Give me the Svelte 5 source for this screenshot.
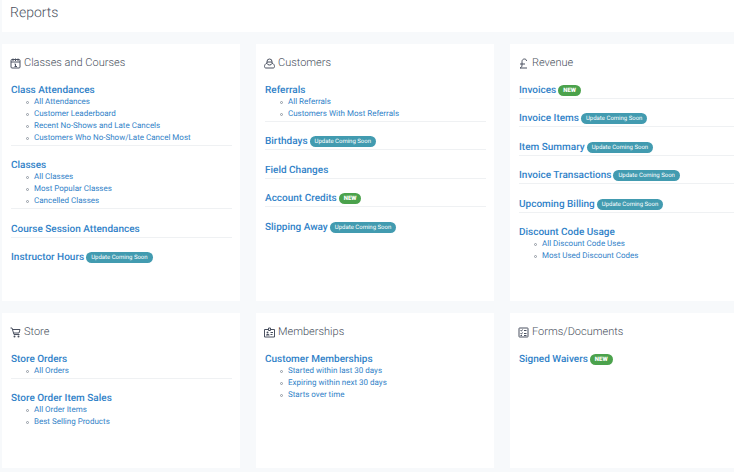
<script>
  const groups = [
    {
      name: 'Classes and Courses',
      icon: 'calendar',
      reports: [
        {
          name: 'Class Attendances',
          links: [
            'All Attendances',
            'Customer Leaderboard',
            'Recent No-Shows and Late Cancels',
            'Customers Who No-Show/Late Cancel Most',
          ],
        },
        {
          name: 'Classes',
          links: ['All Classes', 'Most Popular Classes', 'Cancelled Classes'],
        },
        { name: 'Course Session Attendances' },
        { name: 'Instructor Hours', badge: 'soon' },
      ],
    },
    {
      name: 'Customers',
      icon: 'customer',
      reports: [
        {
          name: 'Referrals',
          links: ['All Referrals', 'Customers With Most Referrals'],
        },
        { name: 'Birthdays', badge: 'soon' },
        { name: 'Field Changes' },
        { name: 'Account Credits', badge: 'new' },
        { name: 'Slipping Away', badge: 'soon' },
      ],
    },
    {
      name: 'Revenue',
      icon: 'pound',
      reports: [
        { name: 'Invoices', badge: 'new' },
        { name: 'Invoice Items', badge: 'soon' },
        { name: 'Item Summary', badge: 'soon' },
        { name: 'Invoice Transactions', badge: 'soon' },
        { name: 'Upcoming Billing', badge: 'soon' },
        {
          name: 'Discount Code Usage',
          links: ['All Discount Code Uses', 'Most Used Discount Codes'],
        },
      ],
    },
    {
      name: 'Store',
      icon: 'cart',
      reports: [
        { name: 'Store Orders', links: ['All Orders'] },
        {
          name: 'Store Order Item Sales',
          links: ['All Order Items', 'Best Selling Products'],
        },
      ],
    },
    {
      name: 'Memberships',
      icon: 'card',
      reports: [
        {
          name: 'Customer Memberships',
          links: [
            'Started within last 30 days',
            'Expiring within next 30 days',
            'Starts over time',
          ],
        },
      ],
    },
    {
      name: 'Forms/Documents',
      icon: 'form',
      reports: [{ name: 'Signed Waivers', badge: 'new' }],
    },
  ]

  const badges = { new: 'NEW', soon: 'Update Coming Soon' }
</script>

<header>
  <h1>Reports</h1>
</header>

<main>
  {#each groups as group}
    <section class="card">
      <h2>
        <svg viewBox="0 0 22 22" aria-hidden="true">
          {#if group.icon === 'calendar'}
            <rect x="2" y="3" width="18" height="17" rx="2" />
            <path d="M2 8h18" />
            <path d="M6 1v5M11 1v5M16 1v5" />
            <path d="M9 12h2v5M9 17h5" />
          {:else if group.icon === 'customer'}
            <path d="M6 11V7a5 5 0 0 1 10 0v4M6 8h10" />
            <path
              d="M6 10c-3 1-5 4-5 7 0 2 1 3 3 3h14c2 0 3-1 3-3 0-3-2-6-5-7"
            />
            <path d="M6 11c1 4 9 4 10 0" />
          {:else if group.icon === 'pound'}
            <path
              d="M17 6c0-3-2-4-4-4-3 0-5 2-5 5v7c0 3-1 5-4 6h14M4 12h10"
            />
          {:else if group.icon === 'cart'}
            <path d="M1 2h3l4 13h11M5 5h15l-2 7H7" />
            <circle class="solid" cx="9" cy="19" r="2" />
            <circle class="solid" cx="17" cy="19" r="2" />
          {:else if group.icon === 'card'}
            <path d="M8 5H1v15h20V5h-7" />
            <path d="M9 2h4v5H9z" />
            <path d="M13 11h5M13 15h4" />
            <circle class="solid" cx="7" cy="11" r="2" />
            <path class="solid" d="M4 17v-1c0-3 7-3 7 0v1z" />
          {:else}
            <rect x="2" y="2" width="18" height="18" rx="1" />
            <path d="M5 7l2 1 2-3M5 13l2 1 2-3" />
            <path d="M12 7h5M12 13h5M5 17h3M12 17h5" />
          {/if}
        </svg>
        {group.name}
      </h2>

      {#each group.reports as report}
        <div class="report">
          <h3>
            <a href="#report">{report.name}</a>
            {#if report.badge}
              <span class="badge {report.badge}">{badges[report.badge]}</span>
            {/if}
          </h3>
          {#if report.links}
            <ul>
              {#each report.links as link}
                <li><a href="#report">{link}</a></li>
              {/each}
            </ul>
          {/if}
        </div>
      {/each}
    </section>
  {/each}
</main>

<style>
  :global(body) {
    background: #f7f9fb;
    color: #4a5160;
    font-family: Roboto, 'Liberation Sans', sans-serif;
    text-rendering: geometricPrecision;
    overflow-x: hidden;
  }

  header {
    margin-left: 2px;
    padding: 5px 8px 11px;
    background: #fff;
  }

  h1 {
    margin: 0;
    font-size: 14px;
    font-weight: 300;
    line-height: 16px;
  }

  main {
    display: grid;
    grid-template-columns: repeat(3, minmax(0, 1fr));
    gap: 12px 16px;
    margin: 12px -14px 4px 2px;
  }

  .card {
    box-sizing: border-box;
    min-height: 155px;
    padding: 11px 8px 38px 9px;
    background: #fff;
  }

  h2 {
    display: flex;
    align-items: center;
    gap: 3px;
    margin: 0 0 14px;
    font-size: 11px;
    font-weight: 300;
    line-height: 16px;
  }

  svg {
    flex: none;
    width: 11px;
    height: 11px;
    margin-left: -1px;
    fill: none;
    stroke: currentColor;
    stroke-width: 2;
  }

  .solid {
    fill: currentColor;
    stroke: none;
  }

  a {
    color: #3182c8;
    text-decoration: none;
  }

  a:hover {
    text-decoration: underline;
  }

  .report {
    margin-bottom: 15px;
    padding-bottom: 2px;
    border-bottom: 1px solid #eff1f3;
  }

  .report:nth-child(even) {
    margin-bottom: 14px;
  }

  .report:last-child {
    margin-bottom: 0;
    padding-bottom: 0;
    border-bottom: none;
  }

  h3 {
    display: flex;
    align-items: center;
    gap: 2px;
    margin: 0;
    font-size: 10px;
    font-weight: 500;
    line-height: 11px;
  }

  .badge {
    padding: 0 5px;
    border-radius: 6px;
    color: #fff;
    font-size: 6px;
    font-weight: 400;
  }

  .soon {
    background: #429bb0;
  }

  .new {
    background: #4ba24c;
    font-weight: 900;
  }

  ul {
    margin: 0 0 -1px;
    padding: 0 0 0 15px;
    list-style: none;
    font-size: 8px;
    line-height: 12px;
  }

  li {
    display: flex;
    align-items: center;
    gap: 5px;
  }

  li::before {
    content: '';
    width: 1px;
    height: 1px;
    border: 1px solid #9299a3;
    border-radius: 50%;
  }
</style>
